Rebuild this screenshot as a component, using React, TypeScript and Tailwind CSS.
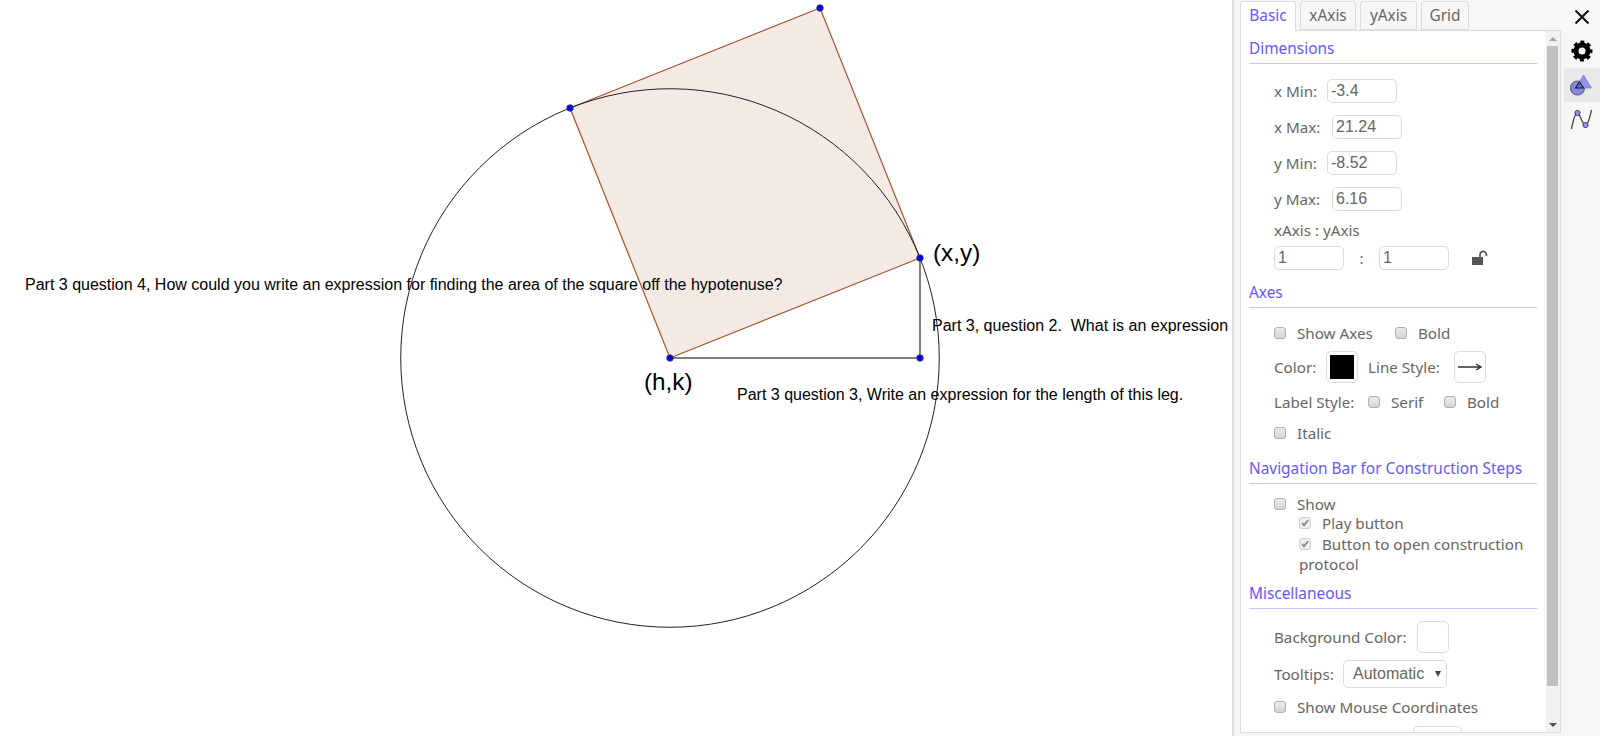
import React from 'react';

const Head: React.FC<{ title: string; className?: string }> = ({ title, className }) => (
  <div className={`h-[28px] pb-[3px] border-b border-[#c8c4ff] text-[#6557ff] text-[15.4px] leading-[26px] ${className ?? ''}`}>{title}</div>
);

const Check: React.FC<{ checked?: boolean }> = ({ checked }) => (
  <span className={`inline-flex w-[12px] h-[12px] shrink-0 items-center justify-center rounded-[3px] border ${checked ? 'border-[#cfcfcf] bg-[#eeeeee]' : 'border-[#b0b0b0] bg-gradient-to-b from-[#ececec] to-[#d4d4d4]'}`}>
    {checked && (
      <svg width="10" height="10" viewBox="0 0 10 10">
        <path d="M2 5l2 2.400L8 2.200" fill="none" stroke="#8a8a8a" strokeWidth="1.800" />
      </svg>
    )}
  </span>
);

const Field: React.FC<{ value: string; className: string }> = ({ value, className }) => (
  <div className={`h-[24px] rounded-[5px] border border-[#dcdcdc] pl-[3px] text-[16px] leading-[22px] text-[#666] font-['Liberation_Sans',sans-serif] ${className}`}>{value}</div>
);

const DimRow: React.FC<{ label: string; value: string; w: string }> = ({ label, value, w }) => (
  <div className="flex items-center h-[24px]">
    <span className={w}>{label}</span>
    <Field value={value} className="w-[70px]" />
  </div>
);

const Opt: React.FC<{ label: string; className?: string; checked?: boolean }> = ({ label, className, checked }) => (
  <span className={`inline-flex items-center gap-[11px] ${className ?? ''}`}>
    <Check checked={checked} />
    {label}
  </span>
);

const Canvas = () => (
  <div className="relative w-[1232px] h-full overflow-hidden bg-white font-['Liberation_Sans',sans-serif] text-black">
    <svg width="1232" height="736" className="absolute left-0 top-0">
      <circle cx="670" cy="358" r="269.260" fill="none" stroke="#222" strokeWidth="1" />
      <polygon points="670,358 920,258 820,8 570,108" fill="#f3eae6" stroke="#a5532a" strokeWidth="1.200" />
      <path d="M670 358H920V258" fill="none" stroke="#808080" strokeWidth="2" />
      <path d="M570 108A269.260 269.260 0 0 1 920 258" fill="none" stroke="#222" strokeWidth="1" />
      {[[670, 358], [920, 358], [920, 258], [820, 8], [570, 108]].map(([x, y]) => (
        <circle key={`${x}-${y}`} cx={x} cy={y} r="3.300" fill="#0000ff" stroke="#444" strokeWidth="0.800" />
      ))}
    </svg>
    <span className="absolute left-[25px] top-[276px] text-[16px] leading-[18px] whitespace-nowrap">Part 3 question 4, How could you write an expression for finding the area of the square off the hypotenuse?</span>
    <span className="absolute left-[932px] top-[317px] text-[16px] leading-[18px] whitespace-pre">Part 3, question 2.  What is an expression</span>
    <span className="absolute left-[737px] top-[386px] text-[16px] leading-[18px] whitespace-nowrap">Part 3 question 3, Write an expression for the length of this leg.</span>
    <span className="absolute left-[933px] top-[239px] text-[24.300px] leading-[28px]">(x,y)</span>
    <span className="absolute left-[644px] top-[368px] text-[24.300px] leading-[28px]">(h,k)</span>
  </div>
);

const Panel = () => (
  <div className="w-[368px] h-full flex border-l-2 border-[#dcdcdc] bg-[#f7f7f7] font-['Noto_Sans',sans-serif] text-[#666] text-[15.200px]">
    <div className="w-[321px] ml-[6px] flex flex-col h-[733px]">
      <div className="flex h-[30px] pt-[1px] gap-[4px] text-[15.400px] leading-[28px]">
        <div className="relative z-10 h-[30px] w-[56px] bg-white border border-b-0 border-[#dcdcdc] rounded-t-[3px] text-center text-[#6557ff]">Basic</div>
        <div className="h-[29px] w-[56px] border border-[#dcdcdc] rounded-t-[3px] text-center">xAxis</div>
        <div className="h-[29px] w-[57px] border border-[#dcdcdc] rounded-t-[3px] text-center">yAxis</div>
        <div className="h-[29px] w-[48px] border border-[#dcdcdc] rounded-t-[3px] text-center">Grid</div>
      </div>
      <div className="flex-1 flex min-h-0 bg-white border border-[#dcdcdc]">
        <div className="flex-1 overflow-hidden pl-[8px] pr-[9px] pt-[5px] leading-[20px]">
          <Head title="Dimensions" />
          <div className="pl-[25px] pt-[15px] flex flex-col gap-[12px]">
            <DimRow label="x Min:" value="-3.4" w="w-[53px]" />
            <DimRow label="x Max:" value="21.24" w="w-[58px]" />
            <DimRow label="y Min:" value="-8.52" w="w-[53px]" />
            <DimRow label="y Max:" value="6.16" w="w-[58px]" />
          </div>
          <div className="pl-[25px] mt-[9px] h-[20px]">xAxis : yAxis</div>
          <div className="pl-[25px] mt-[6px] flex items-center">
            <Field value="1" className="w-[70px]" />
            <span className="w-[35px] text-center">:</span>
            <Field value="1" className="w-[70px]" />
            <svg width="18" height="16" viewBox="0 0 18 16" className="ml-[22px]">
              <rect x="1" y="7" width="11" height="8" fill="#555" />
              <path d="M9 7V4.500a3.200 3.200 0 0 1 6.400 0V6" fill="none" stroke="#555" strokeWidth="1.700" />
            </svg>
          </div>
          <Head title="Axes" className="mt-[10px]" />
          <div className="pl-[25px]">
            <div className="flex items-center h-[20px] mt-[15px]">
              <Opt label="Show Axes" className="w-[121px]" />
              <Opt label="Bold" />
            </div>
            <div className="flex items-center h-[32px] mt-[8px]">
              <span className="w-[52px]">Color:</span>
              <span className="w-[32px] h-[32px] rounded-[5px] border border-[#dcdcdc] p-[3px]">
                <span className="block w-full h-full bg-black" />
              </span>
              <span className="ml-[10px] w-[86px]">Line Style:</span>
              <span className="w-[32px] h-[32px] rounded-[5px] border border-[#dcdcdc] flex items-center justify-center">
                <svg width="24" height="10" viewBox="0 0 24 10">
                  <path d="M0 5H22M18 2l5 3-5 3" fill="none" stroke="#333" strokeWidth="1.400" />
                </svg>
              </span>
            </div>
            <div className="flex items-center h-[20px] mt-[9px]">
              <span className="w-[94px]">Label Style:</span>
              <Opt label="Serif" className="w-[76px]" />
              <Opt label="Bold" />
            </div>
            <div className="flex items-center h-[20px] mt-[11px]">
              <Opt label="Italic" />
            </div>
          </div>
          <Head title="Navigation Bar for Construction Steps" className="mt-[13px]" />
          <div className="pl-[25px]">
            <div className="flex items-center h-[20px] mt-[10px]">
              <Opt label="Show" />
            </div>
            <div className="pl-[25px] -mt-[1px]">
              <div className="flex items-center h-[20px]">
                <Opt label="Play button" checked />
              </div>
              <div>
                <Opt label="Button to open construction" className="h-[20px]" checked />
                <div>protocol</div>
              </div>
            </div>
          </div>
          <Head title="Miscellaneous" className="mt-[7px]" />
          <div className="pl-[25px]">
            <div className="flex items-center h-[32px] mt-[12px]">
              <span className="w-[143px]">Background Color:</span>
              <span className="w-[32px] h-[32px] rounded-[5px] border border-[#dcdcdc]" />
            </div>
            <div className="flex items-center h-[28px] mt-[7px]">
              <span className="w-[69px]">Tooltips:</span>
              <span className="relative w-[104px] h-[28px] rounded-[5px] border border-[#dcdcdc] pl-[9px] leading-[26px] text-[16px] font-['Liberation_Sans',sans-serif]">
                Automatic
                <span className="absolute right-[5px] top-[10px] w-0 h-0 border-x-[3px] border-x-transparent border-t-[6px] border-t-[#444]" />
              </span>
            </div>
            <div className="flex items-center h-[20px] mt-[9px]">
              <Opt label="Show Mouse Coordinates" />
            </div>
            <div className="ml-[139px] mt-[9px] w-[49px] h-[28px] rounded-[5px] border border-[#dcdcdc]" />
          </div>
        </div>
        <div className="w-[14px] shrink-0 flex flex-col bg-[#f1f1f1]">
          <div className="h-[15px] flex items-center justify-center">
            <span className="w-0 h-0 border-x-[4px] border-x-transparent border-b-[4px] border-b-[#a3a3a3]" />
          </div>
          <div className="ml-[1px] w-[11px] h-[640px] bg-[#c1c1c1]" />
          <div className="mt-auto h-[15px] flex items-center justify-center">
            <span className="w-0 h-0 border-x-[4px] border-x-transparent border-t-[4px] border-t-[#505050]" />
          </div>
        </div>
      </div>
    </div>
    <div className="flex-1 ml-[3px] flex flex-col items-center pt-[7px]">
      <svg width="20" height="20" viewBox="0 0 20 20" className="mb-[12px]">
        <path d="M3.500 3.500l13 13M16.500 3.500l-13 13" stroke="#111" strokeWidth="2" />
      </svg>
      <svg width="24" height="24" viewBox="0 0 24 24" className="mb-[5px]">
        <circle cx="12" cy="12" r="6" fill="none" stroke="#000" strokeWidth="5" />
        <circle cx="12" cy="12" r="9" fill="none" stroke="#000" strokeWidth="3" strokeDasharray="3.900 3.170" strokeDashoffset="1.950" />
      </svg>
      <div className="w-full h-[34px] bg-[#e9e9e9] flex items-center justify-center">
        <svg width="24" height="24" viewBox="0 0 24 24">
          <circle cx="7.500" cy="15" r="7" fill="#8585f5" stroke="#666" strokeWidth="1.200" />
          <path d="M13.500 2l8 13h-16z" fill="#8f8ff5" stroke="#8080c0" strokeWidth="0.800" />
          <path d="M9.500 9l4 6h-8z" fill="#6a6ae0" stroke="#222" strokeWidth="1.200" />
        </svg>
      </div>
      <svg width="24" height="24" viewBox="0 0 24 24" className="mt-[5px]">
        <path d="M1.500 22C3 14 5 6 7.500 6c2.500 0 4.500 12 8 12 2.500 0 4.500-8 6-15" fill="none" stroke="#444" strokeWidth="1.300" />
        <circle cx="7.500" cy="6" r="2.600" fill="#8f8ff5" stroke="#444" />
        <circle cx="15.500" cy="18" r="2.600" fill="#8f8ff5" stroke="#444" />
      </svg>
    </div>
  </div>
);

export default function App() {
  return (
    <div className="flex w-[1600px] h-[736px] overflow-hidden bg-white">
      <Canvas />
      <Panel />
    </div>
  );
}
